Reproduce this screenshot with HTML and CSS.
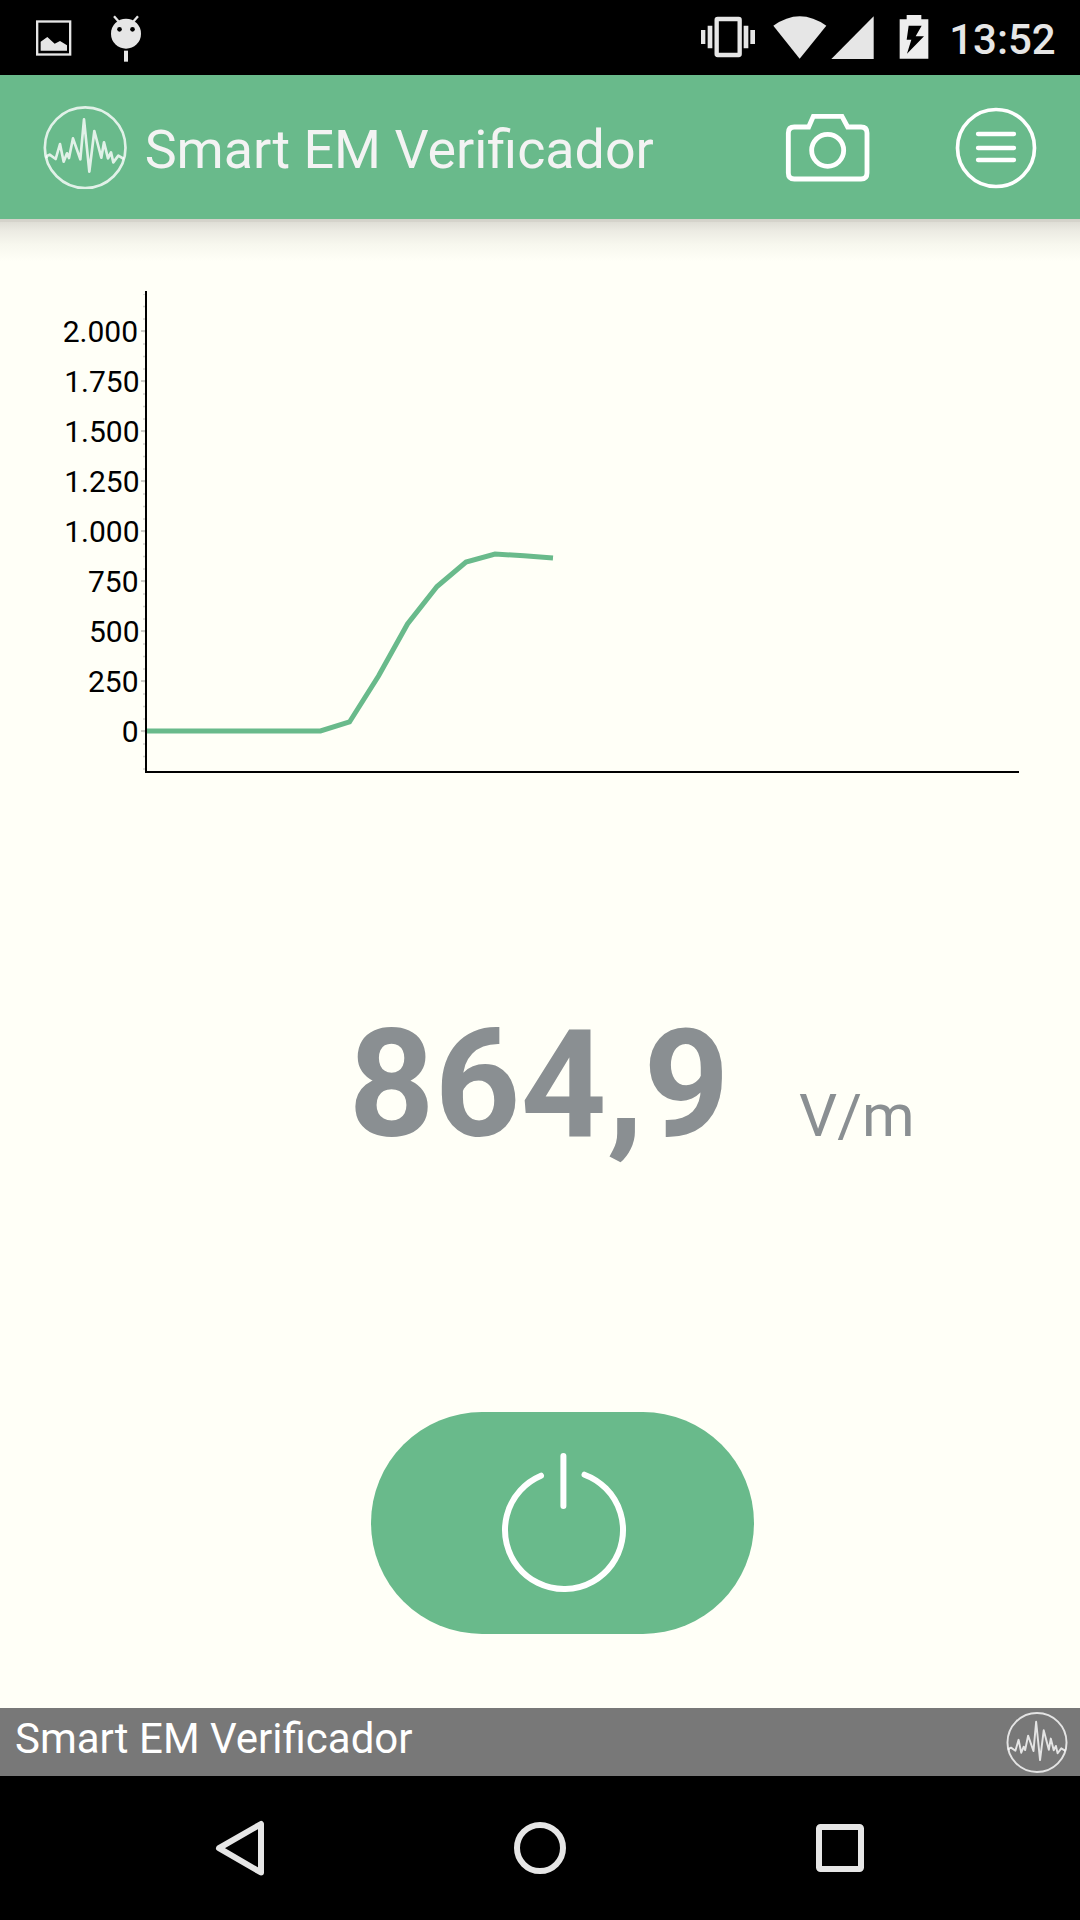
FILE: index.html
```html
<!DOCTYPE html>
<html lang="pt">
<head>
<meta charset="utf-8">
<title>Smart EM Verificador</title>
<link rel="stylesheet" href="styles.css">
</head>
<body>
<svg class="defs" width="0" height="0" aria-hidden="true">
  <symbol id="pulse-logo" viewBox="130 318 253 250">
    <circle cx="256.500" cy="443" r="121"/>
    <path d="M140 474L143 467L150 464L168 477L181 432L192 485L202 460L208 474L220 415L242 478L253 358L269 515L284 393L305 473L313 427L325 475L334 457L341 487L356 467L373 477"/>
  </symbol>
</svg>

<div class="status-bar">
  <svg class="icon-gallery" width="36" height="36" viewBox="108 60 108 108">
    <rect x="111.500" y="64.500" width="99" height="99" fill="none" stroke="#e6e6e6" stroke-width="7"/>
    <path d="M122 152V125L142 111L164 131L180 123L201 136V152Z" fill="#e6e6e6"/>
  </svg>
  <svg class="icon-debug" width="32" height="48" viewBox="330 45 96 144">
    <path d="M342 49L358 67M414 49L398 67" stroke="#e6e6e6" stroke-width="7"/>
    <circle cx="378" cy="101" r="45" fill="#e6e6e6"/>
    <circle cx="358.500" cy="88" r="7"/><circle cx="397.500" cy="88" r="7"/>
    <rect x="372" y="152" width="12" height="33" fill="#e6e6e6"/>
  </svg>
  <svg class="icon-vibrate" width="56" height="44" viewBox="60 45 168 132" fill="#e6e6e6">
    <rect x="110" y="57" width="69" height="108" rx="3" fill="none" stroke="#e6e6e6" stroke-width="13"/>
    <path d="M83 77h14v68h-14zM191 77h14v68h-14zM63 90h13v42h-13zM211 90h14v42h-14z"/>
  </svg>
  <svg class="icon-wifi" width="54" height="44" viewBox="278 45 162 132">
    <path d="M358 176L279 77Q358 20 438 77Z" fill="#e6e6e6"/>
  </svg>
  <svg class="icon-signal" width="43" height="44" viewBox="454 45 129 132">
    <path d="M455 177L582 49V177Z" fill="#e6e6e6"/>
  </svg>
  <svg class="icon-battery" width="30" height="44" viewBox="655 45 90 132">
    <path d="M657 58H678V45H722V58H743V176H657Z" fill="#eee"/>
    <path d="M684 77H723L705 109H730L679 161L692 119H678Z"/>
  </svg>
  <span class="clock">13:52</span>
</div>

<header class="app-bar">
  <svg class="logo" width="84.330" height="83.330"><use href="#pulse-logo"/></svg>
  <h1 class="title">Smart EM Verificador</h1>
  <svg class="icon-camera" width="86" height="70" viewBox="317 338 258 210" fill="none" stroke="#fff">
    <path d="M388 380L402 348H488L505 380H545Q563 380 563 398V518Q563 536 545 536H345Q327 536 327 518V398Q327 380 345 380Z" stroke-width="14.500"/>
    <circle cx="445" cy="450" r="48" stroke-width="14.500"/>
  </svg>
  <svg class="icon-menu" width="82" height="82" viewBox="826 320 246 246" fill="none" stroke="#fff">
    <circle cx="949" cy="443" r="115.500" stroke-width="11"/>
    <path d="M895 401H1003M895 443H1003M895 479H1003" stroke-width="13" stroke-linecap="round"/>
  </svg>
</header>

<main class="content">
  <svg class="chart" width="1080" height="520" viewBox="0 270 1080 520">
    <path class="ticks-minor" d="M144 294V770"/>
    <path class="ticks-major" d="M143 330V740"/>
    <g class="labels">
      <text x="138" y="342">2.000</text>
      <text x="139.500" y="392">1.750</text>
      <text x="139.500" y="442">1.500</text>
      <text x="139.500" y="492">1.250</text>
      <text x="139.500" y="542">1.000</text>
      <text x="138.500" y="592">750</text>
      <text x="139.500" y="642">500</text>
      <text x="138.500" y="692">250</text>
      <text x="138.500" y="742">0</text>
    </g>
    <polyline class="series" points="147,731 320.500,731 349.500,722 378.500,676 407.500,624 437,586.500 466,562 495,554 524,555.800 553,558"/>
    <path class="axes" d="M146 291V772H1019"/>
  </svg>

  <div class="reading">
    <span class="value">864,9</span>
    <span class="unit">V/m</span>
  </div>

  <button class="power" aria-label="Power">
    <svg width="130" height="146" viewBox="499 1448 130 146" fill="none" stroke="#fff" stroke-width="6" stroke-linecap="round">
      <path d="M541 1475.700A59 59 0 1 0 584.500 1474.700M563.400 1456V1506"/>
    </svg>
  </button>
</main>

<footer class="footer">
  <span>Smart EM Verificador</span>
  <svg class="logo" width="62" height="61"><use href="#pulse-logo"/></svg>
</footer>

<nav class="nav-bar">
  <svg width="60" height="60" viewBox="210 1818 60 60"><path d="M261 1824V1872.500L219 1848.200Z"/></svg>
  <svg width="60" height="60" viewBox="510 1818 60 60"><circle cx="540" cy="1848" r="23"/></svg>
  <svg width="60" height="60" viewBox="810 1818 60 60"><rect x="819" y="1827" width="42" height="42" rx="1.500"/></svg>
</nav>
</body>
</html>
```
FILE: styles.css
```css
* { box-sizing: border-box; }

body {
  margin: 0;
  width: 1080px;
  height: 1920px;
  display: flex;
  flex-direction: column;
  background: #fffff7;
  font-family: Roboto, "Liberation Sans", sans-serif;
  overflow: hidden;
}

svg { display: block; flex: none; }
.defs { position: absolute; }

.status-bar {
  height: 75px;
  flex: none;
  display: flex;
  align-items: flex-start;
  padding: 15px 0 0 36px;
  background: #000;
}
.icon-gallery { margin-top: 5px; }
.icon-debug { margin-left: 38px; }
.icon-vibrate { margin-left: 558px; }
.icon-wifi { margin-left: 16.670px; }
.icon-signal { margin-left: 4.670px; }
.icon-battery { margin-left: 24.330px; }
.clock {
  margin-left: 20.500px;
  color: #e6e6e6;
  font-size: 42px;
  font-weight: 500;
  line-height: 50px;
}

.app-bar {
  height: 144px;
  flex: none;
  display: flex;
  align-items: center;
  padding: 2px 0 0 43.300px;
  background: #69ba8b;
}
.logo {
  fill: none;
  stroke: #fff;
  stroke-opacity: .8;
  stroke-width: 8px;
  stroke-linejoin: round;
}
.title {
  margin: 3px 0 0 17px;
  width: 640.700px;
  color: #f3f3f3;
  font-size: 53.800px;
  font-weight: 400;
  line-height: 64px;
}
.icon-menu { margin-left: 83.700px; }

.content {
  flex: 1;
  background: linear-gradient(#d5d3cb 3px, #dfded6 3px, #ecebe3 12px, #f7f7ee 25px, #fffff7 42px);
}
.chart { margin-top: 51px; }
.labels { font-size: 30px; text-anchor: end; fill: #000; }
.axes { fill: none; stroke: #000; stroke-width: 2px; }
.series { fill: none; stroke: #69ba8b; stroke-width: 5px; }
.ticks-minor { stroke: #d4d4ce; stroke-width: 2px; stroke-dasharray: 1.500 11; stroke-dashoffset: .700; }
.ticks-major { stroke: #ccccc6; stroke-width: 4px; stroke-dasharray: 2 48; }

.reading {
  display: flex;
  align-items: baseline;
  margin-top: 205px;
  padding-left: 348.500px;
  color: #8a8f92;
  line-height: 180px;
}
.value { width: 450.500px; font-size: 150px; font-weight: 700; }
.unit { font-size: 60px; }

.power {
  display: flex;
  justify-content: center;
  width: 383px;
  height: 222px;
  margin: 206px 0 0 371px;
  padding: 36px 0 0 3px;
  border: 0;
  border-radius: 111px;
  background: #69ba8b;
}

.footer {
  height: 68px;
  flex: none;
  display: flex;
  align-items: center;
  justify-content: space-between;
  padding: 0 12px 0 15px;
  background: #787878;
  color: #fff;
  font-size: 42px;
  line-height: 50px;
}
.footer span { margin-top: -7px; }

.nav-bar {
  height: 144px;
  flex: none;
  display: grid;
  grid-template-columns: repeat(3, 300px);
  place-content: center;
  place-items: center;
  background: #000;
  fill: none;
  stroke: #e6e6e6;
  stroke-width: 6px;
  stroke-linejoin: round;
}
```
